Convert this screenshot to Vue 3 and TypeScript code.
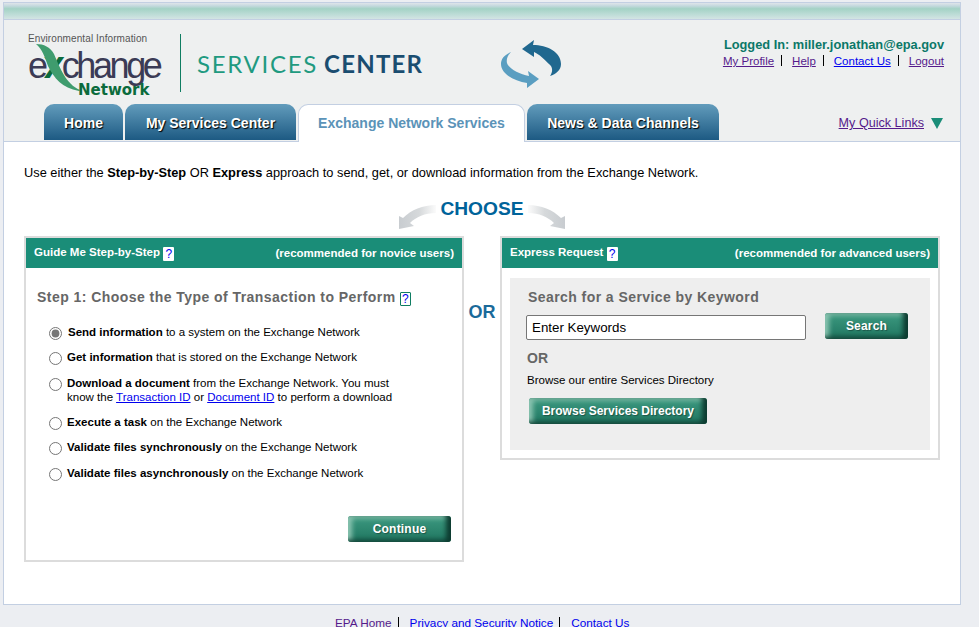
<script setup lang="ts">
interface Choice { strong: string; rest: string; checked?: boolean; tall?: boolean }
const choices: Choice[] = [
  { strong: 'Send information', rest: ' to a system on the Exchange Network', checked: true },
  { strong: 'Get information', rest: ' that is stored on the Exchange Network' },
  { strong: 'Download a document', rest: ' from the Exchange Network. You must', tall: true },
  { strong: 'Execute a task', rest: ' on the Exchange Network' },
  { strong: 'Validate files synchronously', rest: ' on the Exchange Network' },
  { strong: 'Validate files asynchronously', rest: ' on the Exchange Network' },
]
</script>

<template>
  <div class="page">
    <div class="frame">
      <div class="band"></div>
      <header class="header">
        <div class="head-top">
          <div class="logo">
            <div class="logo-cap">Environmental Information</div>
            <div class="logo-word"><span>e</span><span class="logo-x">x</span><span>change</span></div>
            <svg class="swoosh" width="46" height="48" viewBox="0 0 46 48">
              <path d="M2 0 C10 0 16 3 20 10 C26 24 32 40 46 46 L45 47 C28 44 20 34 14 22 C11 13 8 5 2 0Z" fill="#3f9c6e" />
            </svg>
            <div class="logo-net">Network</div>
          </div>
          <div class="divider"></div>
          <div class="title"><span class="t1">SERVICES</span> <span class="t2">CENTER</span></div>
          <svg class="cycle" width="65" height="54" viewBox="0 0 65 54">
            <path d="M23 12 L35 3 L34 8 C48 8 62 15 62 27 C62 33 57 37 51 39 C54 35 54 30 50 27 C46 23 40 17 35 15 L35 20Z" fill="#20688f" />
            <path d="M12 15 C5 18 2 22 2 27 C2 37 15 44 28 46 L28 51 L40 42 L29 34 L30 39 C20 37 10 32 8 26 C7 22 9 18 12 15Z" fill="#5a9ec1" />
          </svg>
          <div class="user">
            <div class="logged">Logged In: miller.jonathan@epa.gov</div>
            <div class="user-links">
              <a class="visited">My Profile</a><i></i>
              <a class="visited">Help</a><i></i>
              <a>Contact Us</a><i></i>
              <a class="visited">Logout</a>
            </div>
          </div>
        </div>
        <nav class="tabs">
          <div class="tab tab-home">Home</div>
          <div class="tab tab-my">My Services Center</div>
          <div class="tab tab-active">Exchange Network Services</div>
          <div class="tab tab-news">News &amp; Data Channels</div>
          <div class="quick"><a class="visited">My Quick Links</a><span class="tri"></span></div>
        </nav>
      </header>

      <main class="content">
        <p class="intro">Use either the <b>Step-by-Step</b> OR <b>Express</b> approach to send, get, or download information from the Exchange Network.</p>
        <div class="choose">
          <svg width="38" height="25" viewBox="0 0 38 25">
            <defs>
              <linearGradient id="fadeL" x1="0" x2="1" y1="0" y2="0">
                <stop offset="0" stop-color="#c8ccd0" />
                <stop offset="0.55" stop-color="#d6d9db" />
                <stop offset="1" stop-color="#fbfbfb" />
              </linearGradient>
            </defs>
            <path d="M37 0 C24 0 12 5 4 13 L0 11 L0 24 L15 21 L11 18 C17 12 26 8 37 8Z" fill="url(#fadeL)" />
          </svg>
          <span>CHOOSE</span>
          <svg width="38" height="25" viewBox="0 0 38 25">
            <defs>
              <linearGradient id="fadeR" x1="0" x2="1" y1="0" y2="0">
                <stop offset="0" stop-color="#fbfbfb" />
                <stop offset="0.45" stop-color="#d6d9db" />
                <stop offset="1" stop-color="#c8ccd0" />
              </linearGradient>
            </defs>
            <path d="M1 0 C14 0 26 5 34 13 L38 11 L38 24 L23 21 L27 18 C21 12 12 8 1 8Z" fill="url(#fadeR)" />
          </svg>
        </div>
        <div class="columns">
          <section class="card card-left">
            <div class="card-head">
              <span class="head-l">Guide Me Step-by-Step <em class="q">?</em></span>
              <span class="head-r">(recommended for novice users)</span>
            </div>
            <div class="step-body">
              <h2 class="step">Step 1: Choose the Type of Transaction to Perform <em class="q q-line">?</em></h2>
              <div class="radios">
                <label v-for="c in choices" :key="c.strong" class="radio" :class="{ tall: c.tall, on: c.checked }">
                  <input type="radio" name="tx" :checked="c.checked" />
                  <span>
                    <b>{{ c.strong }}</b>{{ c.rest }}
                    <template v-if="c.tall"><br />know the <a>Transaction ID</a> or <a>Document ID</a> to perform a download</template>
                  </span>
                </label>
              </div>
              <div class="actions"><button class="btn btn-continue">Continue</button></div>
            </div>
          </section>
          <div class="or">OR</div>
          <section class="card card-right">
            <div class="card-head">
              <span class="head-l">Express Request <em class="q">?</em></span>
              <span class="head-r">(recommended for advanced users)</span>
            </div>
            <div class="express">
              <div class="search-panel">
                <h3>Search for a Service by Keyword</h3>
                <div class="search-row">
                  <input class="kw" type="text" value="Enter Keywords" />
                  <button class="btn btn-search">Search</button>
                </div>
                <div class="or2">OR</div>
                <div class="browse-text">Browse our entire Services Directory</div>
                <button class="btn btn-browse">Browse Services Directory</button>
              </div>
            </div>
          </section>
        </div>
      </main>
    </div>
    <footer class="footer">
      <a class="visited">EPA Home</a><i></i>
      <a>Privacy and Security Notice</a><i></i>
      <a>Contact Us</a>
    </footer>
  </div>
</template>

<style>
html, body { margin: 0; padding: 0; overflow: hidden; }
</style>

<style scoped>
.page {
  width: 979px; height: 627px; overflow: hidden; background: #eceef2;
  padding-top: 2px; box-sizing: border-box;
  font-family: "Liberation Sans", Arial, sans-serif; font-size: 12px; color: #000;
}
a { color: #0000ee; text-decoration: underline; }
a.visited { color: #551a8b; }
.frame { width: 958px; margin-left: 3px; border: 1px solid #c3cfe2; box-sizing: border-box; height: 603px; background: #fff; }
.band { height: 16px; background: linear-gradient(#dfe4ea 0, #c5d9de 18%, #a4d2c5 36%, #bcdcd6 70%, #d3e4e3 100%); border-bottom: 1px solid #c3cfe2; }
.header { height: 122px; background: #eef0f0; border-bottom: 1px solid #c3cfe2; box-sizing: border-box; }
.head-top { height: 84px; display: flex; align-items: flex-start; }
.logo { position: relative; width: 152px; margin-left: 24px; margin-top: 13px; height: 70px; }
.logo-cap { font-size: 10px; line-height: 12px; color: #555; letter-spacing: .1px; white-space: nowrap; }
.swoosh { position: absolute; left: 6px; top: 11px; }
.logo-word { font-size: 36px; line-height: 40px; letter-spacing: -3.4px; color: #3b3b55; white-space: nowrap; }
.logo-x { color: #0b6b3c; font-weight: bold; font-size: 38px; letter-spacing: -3px; margin-left: -1px; }
.logo-net { position: absolute; left: 50px; top: 48px; font-family: "DejaVu Sans", sans-serif; font-weight: bold; font-size: 15px; line-height: 18px; color: #0b6b3c; }
.divider { width: 1px; height: 58px; background: #0f7d62; margin-top: 14px; }
.title { font-family: Lato, sans-serif; font-size: 24px; line-height: 30px; margin: 29px 0 0 16px; width: 303px; white-space: nowrap; }
.t1 { color: #1f9a80; letter-spacing: 1.7px; }
.t2 { color: #1a4d70; font-weight: bold; letter-spacing: 1.2px; }
.cycle { margin-top: 17px; margin-left: -1px; flex: none; }
.user { margin-left: auto; margin-right: 16px; margin-top: 17px; text-align: right; }
.logged { font-size: 12.8px; font-weight: bold; line-height: 16px; color: #0b7868; }
.user-links { font-size: 11.52px; line-height: 15px; margin-top: 1px; white-space: nowrap; }
.user-links i, .footer i { display: inline-block; width: 1px; height: 11px; background: #000; margin: 0 10px 0 7px; vertical-align: -1px; }
.tabs { height: 37px; display: flex; align-items: flex-start; gap: 2px; padding-left: 40px; }
.tab {
  height: 36px; box-sizing: border-box; border-radius: 10px 10px 0 0; text-align: center;
  font-size: 14px; font-weight: bold; line-height: 38px; color: #fff; white-space: nowrap;
  background: linear-gradient(#629cbc, #1d5a83); text-shadow: 1px 1px 1px #000;
}
.tab-home { width: 79px; }
.tab-my { width: 171px; }
.tab-news { width: 192px; }
.tab-active {
  width: 227px; height: 38px; background: #fff; color: #5b93b8; text-shadow: none;
  border: 1px solid #c3cfe2; border-bottom: 0; line-height: 37px; position: relative; z-index: 1;
}
.quick { margin-left: auto; margin-right: 17px; display: flex; align-items: center; height: 38px; font-size: 12.6px; }
.tri { width: 0; height: 0; border-left: 6.5px solid transparent; border-right: 6.5px solid transparent; border-top: 11px solid #1a8d78; margin-left: 7px; }
.content { padding: 23px 20px 0; }
.intro { margin: 0; font-size: 12.8px; line-height: 16px; }
.choose { height: 32px; margin-top: 17px; display: flex; justify-content: center; align-items: flex-start; gap: 3px; color: #00639a; font-size: 19.2px; font-weight: bold; line-height: 22px; }
.choose svg { margin-top: 7px; }
.columns { display: flex; align-items: flex-start; margin-top: 6px; }
.card { width: 440px; box-sizing: border-box; border: 2px solid #dcdcdc; background: #fff; }
.card-left { height: 326px; }
.card-right { height: 224px; }
.card-head { height: 30px; background: #1a8d78; color: #fff; display: flex; justify-content: space-between; align-items: center; padding: 0 8px; font-weight: bold; font-size: 11.52px; }
.q { display: inline-block; width: 11px; height: 14px; background: #fff; color: #00e; font-style: normal; font-weight: normal; font-size: 12px; line-height: 14px; text-align: center; border-radius: 1px; vertical-align: -2px; }
.q-line { border: 1px solid #0f7d62; box-sizing: border-box; height: 14px; line-height: 12px; font-size: 12px; background: #fff; vertical-align: -1px; }
.step-body { padding: 20px 0 0 11px; }
.step { margin: 0; font-size: 14px; line-height: 18px; color: #666; font-weight: bold; letter-spacing: .45px; }
.radios { margin-top: 19px; padding-left: 12px; font-size: 11.52px; }
.radio { display: flex; align-items: flex-start; height: 25.4px; line-height: 14px; }
.radio.tall { height: 39px; }
.radio input { margin: 2px 5px 0 0; width: 13px; height: 13px; flex: none; accent-color: #767676; }
.radio.on input { margin-right: 6px; }
.actions { display: flex; justify-content: flex-end; padding-right: 11px; margin-top: 25px; }
.btn {
  height: 26px; border: 0; padding: 0; border-radius: 3px; cursor: pointer;
  color: #fff; font-family: inherit; font-weight: bold; font-size: 12px; letter-spacing: .2px;
  background: linear-gradient(#3d9a80, #1f7560);
  box-shadow: inset -5px -2px 5px #0d3b30, inset 4px 2px 5px #8cc5b2;
  text-shadow: 1px 1px 1px rgba(0,0,0,.35);
}
.btn-continue { width: 103px; }
.btn-search { width: 83px; margin-left: 19px; margin-top: -2px; }
.btn-browse { width: 178px; margin-left: 3px; margin-top: 11px; display: block; letter-spacing: 0; }
.or { width: 36px; text-align: center; font-size: 18px; font-weight: bold; line-height: 22px; color: #1a6a9a; margin-top: 65px; }
.express { padding: 10px 8px 8px; }
.search-panel { height: 172px; background: #eee; padding: 10px 16px 0; box-sizing: border-box; }
.search-panel h3 { margin: 0 0 0 2px; font-size: 14px; line-height: 18px; color: #666; font-weight: bold; letter-spacing: .43px; }
.search-row { display: flex; align-items: flex-start; margin-top: 9px; }
.kw { width: 280px; height: 25px; box-sizing: border-box; border: 1px solid #767676; border-radius: 2px; padding: 0 5px; font-family: inherit; font-size: 13.33px; background: #fff; color: #000; outline: none; }
.or2 { font-size: 14px; font-weight: bold; color: #666; line-height: 18px; margin: 9px 0 0 1px; }
.browse-text { font-size: 11.52px; line-height: 14px; margin: 6px 0 0 1px; }
.footer { padding-top: 10px; padding-left: 335px; font-size: 11.75px; line-height: 16px; white-space: nowrap; }
.footer i { margin-left: 6px; margin-right: 11px; }
</style>
